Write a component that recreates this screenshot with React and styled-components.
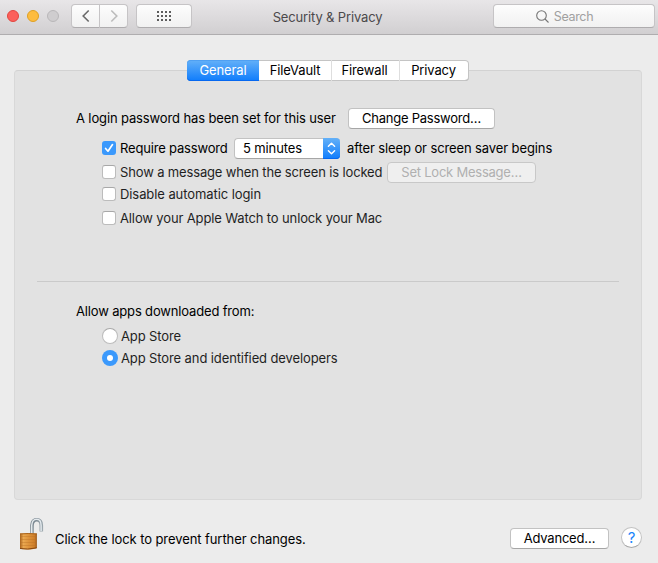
import React, { useState } from 'react';
import styled, { createGlobalStyle, css } from 'styled-components';

const GlobalStyle = createGlobalStyle`
  * {
    box-sizing: border-box;
  }

  body {
    margin: 0;
    background: #ececec;
    font-family: Inter, 'Liberation Sans', sans-serif;
    font-size: 13px;
    letter-spacing: -0.12px;
    color: #000;
  }

  button {
    font: inherit;
    padding: 0;
  }
`;

const Window = styled.div`
  display: flex;
  flex-direction: column;
  width: 658px;
  height: 563px;
  overflow: hidden;
  background: #ececec;
`;

const TitleBar = styled.header`
  display: flex;
  flex: none;
  height: 35px;
  padding: 4px 3px 0 7px;
  background: linear-gradient(#e8e6e8, #d1cfd1);
  border-bottom: 1px solid #afadaf;
`;

const Lights = styled.div`
  display: flex;
  gap: 8px;
  width: 64px;
  padding-top: 6px;
`;

const Light = styled.span`
  width: 12px;
  height: 12px;
  border-radius: 50%;
  background: ${props => props.$fill};
  border: 1px solid ${props => props.$edge};
`;

const barControl = css`
  display: flex;
  align-items: center;
  justify-content: center;
  height: 24px;
  border: 1px solid #c6c4c6;
  border-bottom-color: #aeacae;
  background: linear-gradient(#fdfdfd, #f1f1f1);
`;

const NavButton = styled.button`
  ${barControl}
  width: ${props => (props.$side === 'left' ? 29 : 28)}px;
  border-radius: ${props => (props.$side === 'left' ? '4px 0 0 4px' : '0 4px 4px 0')};
  ${props => props.$side === 'right' && 'border-left: 0;'}
`;

const GridButton = styled.button`
  ${barControl}
  width: 56px;
  margin-left: 8px;
  border-radius: 4px;
`;

const Title = styled.h1`
  flex: 1;
  margin: 0;
  padding: 5px 30px 0 0;
  font-size: 13px;
  line-height: 17px;
  font-weight: 400;
  text-align: center;
  letter-spacing: -0.15px;
  color: #4b494b;
`;

const SearchField = styled.div`
  ${barControl}
  width: 162px;
  gap: 5px;
  padding-right: 19px;
  border-radius: 4px;
  color: #a0a0a0;
  font-size: 12.5px;
  letter-spacing: -0.35px;
`;

const Main = styled.main`
  flex: none;
  padding: 35px 16px 0 14px;
`;

const Panel = styled.section`
  height: 430px;
  border: 1px solid #d8d8d8;
  border-top-color: #d2d2d2;
  border-radius: 4px;
  background: #e2e2e2;
`;

const Tabs = styled.nav`
  display: flex;
  width: 282px;
  height: 21px;
  margin: -11px 0 0 172px;
  border-radius: 4px;
  background: #fff;
  box-shadow: inset 0 0 0 1px #c4c4c4, inset 0 -1px 0 #a5a5a5;
`;

const Tab = styled.button`
  width: ${props => props.$width}px;
  padding-right: ${props => (props.$divided ? 2 : 0)}px;
  border: 0;
  border-left: ${props => (props.$divided ? '1px solid #dedede' : '0')};
  background: none;
  line-height: 21px;
  letter-spacing: -0.12px;

  ${props => props.$active && css`
    color: #fff;
    background: linear-gradient(#64b1f8, #0f7cfc);
    border-radius: 4px 0 0 4px;
    box-shadow: inset 0 1px 0 #4fa0f2, inset 0 -1px 0 #0668f0;
  `}
`;

const Settings = styled.div`
  height: 200px;
  padding: 27px 0 0 61px;
`;

const Row = styled.div`
  display: flex;
  align-items: center;
  height: ${props => props.$height}px;
  padding-left: ${props => (props.$indent ? 26 : 0)}px;
`;

const Label = styled.span`
  flex: none;
  width: ${props => (props.$width ? `${props.$width}px` : 'auto')};
  margin-bottom: 2px;
  white-space: nowrap;
  letter-spacing: ${props => props.$track || -0.13}px;
  color: ${props => (props.$soft ? '#1f1f1f' : '#000')};
`;

const SourceLabel = styled(Label)`
  margin-bottom: 0;
  letter-spacing: -0.11px;
`;

const PushButton = styled.button`
  width: ${props => props.$width}px;
  height: 21px;
  border: 1px solid #c2c2c2;
  border-bottom-color: #a6a6a6;
  border-radius: 4px;
  background: #fff;
  color: #000;
  line-height: 19px;
  letter-spacing: -0.23px;

  &:disabled {
    border-color: #c8c8c8;
    background: #efefef;
    color: #b0b0b0;
  }
`;

const CheckMark = styled.span`
  display: flex;
  flex: none;
  align-items: center;
  justify-content: center;
  width: 14px;
  height: 14px;
  margin: 0 4px 1px 0;
  border: 1px solid #bcbcbc;
  border-top-color: #a8a8a8;
  border-radius: 3px;
  background: #fff;

  ${props => props.$checked && css`
    border: 0;
    background: #3b99fc;
  `}
`;

const Popup = styled.div`
  display: flex;
  justify-content: space-between;
  width: 106px;
  height: 21px;
  margin: 0 7px 0 6px;
  padding-left: 8px;
  border: 1px solid #c2c2c2;
  border-bottom-color: #a6a6a6;
  border-right: 0;
  border-radius: 4px;
  background: #fff;
  line-height: 19px;
`;

const Stepper = styled.span`
  display: flex;
  align-items: center;
  justify-content: center;
  width: 17px;
  height: 21px;
  margin-top: -1px;
  border-radius: 0 4px 4px 0;
  background: linear-gradient(#64b1f8, #0f7cfc);
  box-shadow: inset 0 -1px 0 #0668f0;
`;

const Divider = styled.hr`
  height: 1px;
  margin: 0 22px;
  border: 0;
  background: #cacaca;
`;

const Sources = styled.div`
  padding: 19px 0 0 61px;
`;

const RadioMark = styled.span`
  display: flex;
  flex: none;
  align-items: center;
  justify-content: center;
  width: 16px;
  height: 16px;
  margin-right: 3px;
  border: 1px solid #bcbcbc;
  border-top-color: #a8a8a8;
  border-radius: 50%;
  background: #fff;

  ${props => props.$checked && css`
    border: 0;
    background: #3b99fc;

    &::after {
      content: '';
      width: 6px;
      height: 6px;
      border-radius: 50%;
      background: #fff;
    }
  `}
`;

const Footer = styled.footer`
  display: flex;
  align-items: center;
  height: 63px;
  padding: 14px 16px 0 18px;
`;

const FooterText = styled.span`
  flex: 1;
  padding-left: 11px;
  letter-spacing: -0.08px;
`;

const HelpButton = styled.button`
  width: 21px;
  height: 21px;
  margin: 0 0 2px 12px;
  border: 1px solid #c2c2c2;
  border-bottom-color: #a6a6a6;
  border-radius: 50%;
  background: #fff;
  color: #1a85fb;
  font-size: 15px;
  line-height: 19px;
`;

const Chevron = ({ flip, color }) => (
  <svg width="8" height="14" viewBox="0 0 8 14" fill="none">
    <path d={flip ? 'M1.3 1.5 L6.8 7 L1.3 12.5' : 'M6.7 1.5 L1.2 7 L6.7 12.5'} stroke={color} strokeWidth="1.6" />
  </svg>
);

const DotGrid = () => (
  <svg width="14" height="10" viewBox="0 0 14 10" fill="#5c5c5c">
    {[0, 4, 8].map(y => [0, 4, 8, 12].map(x => (
      <rect key={`${x}-${y}`} x={x} y={y} width="2" height="2" />
    )))}
  </svg>
);

const SearchIcon = () => (
  <svg width="13" height="13" viewBox="0 0 13 13" fill="none" stroke="#757575" strokeWidth="1.1">
    <circle cx="5.5" cy="5.5" r="4.8" />
    <path d="M9 9 L12.5 12.5" />
  </svg>
);

const Tick = () => (
  <svg width="14" height="14" viewBox="0 0 14 14" fill="none">
    <path d="M3.6 7.5 L6 10.2 L10.5 3.6" stroke="#fff" strokeWidth="1.7" strokeLinecap="round" strokeLinejoin="round" />
  </svg>
);

const StepArrows = () => (
  <svg width="9" height="13" viewBox="0 0 9 13" fill="none" stroke="#fff" strokeWidth="1.4" strokeLinecap="round" strokeLinejoin="round">
    <path d="M1.4 4.3 L4.5 1.3 L7.6 4.3" />
    <path d="M1.4 8.7 L4.5 11.7 L7.6 8.7" />
  </svg>
);

const Lock = styled.svg`
  flex: none;
  margin-bottom: 9px;
`;

const LockIcon = () => (
  <Lock width="26" height="34" viewBox="0 0 26 34">
    <defs>
      <linearGradient id="brass" x1="0" x2="1" y1="0" y2="0">
        <stop offset="0" stopColor="#a8621c" />
        <stop offset="0.2" stopColor="#eaa850" />
        <stop offset="0.5" stopColor="#de943c" />
        <stop offset="0.85" stopColor="#cf7f2a" />
        <stop offset="1" stopColor="#9b5a1c" />
      </linearGradient>
      <linearGradient id="steel" x1="0" x2="1" y1="0" y2="1">
        <stop offset="0" stopColor="#6c7a84" />
        <stop offset="0.5" stopColor="#8d9aa2" />
        <stop offset="1" stopColor="#a0abb1" />
      </linearGradient>
    </defs>
    <path d="M14 17 V8.5 C14 4.8 16 2.8 18.7 2.8 C21.6 2.8 23.3 5 23.3 8.5 V14.5" fill="none" stroke="url(#steel)" strokeWidth="3.6" />
    <path d="M13.7 17 V8.5 C13.9 4.6 16 2.3 18.7 2.3 C21.8 2.3 23.1 5 23.1 8.5 V14" fill="none" stroke="#e3e9ed" strokeWidth="1.5" />
    <path d="M2 16.6 Q10 15.6 18.9 16.6 V30.8 Q17 32.6 9 32.6 Q3.6 32.4 2 31.6 Z" fill="url(#brass)" />
    <path d="M2 17 Q10 16 18.9 17" fill="none" stroke="#a9641d" strokeWidth="1" />
    {[19.5, 22.5, 25.5, 28.5].map(y => (
      <path key={y} d={`M2.5 ${y} H18.5`} stroke="#b86f24" strokeWidth="0.8" opacity="0.45" />
    ))}
    <path d="M2 31.5 Q9 33 18.9 30.8" fill="none" stroke="#84450f" strokeWidth="1" />
  </Lock>
);

const tabs = [
  { name: 'General', width: 72 },
  { name: 'FileVault', width: 72 },
  { name: 'Firewall', width: 68 },
  { name: 'Privacy', width: 70 },
];

const sources = ['App Store', 'App Store and identified developers'];

const App = () => {
  const [activeTab, setActiveTab] = useState('General');
  const [source, setSource] = useState(sources[1]);

  return (
    <>
      <GlobalStyle />
      <Window>
        <TitleBar>
          <Lights>
            <Light $fill="#fc605b" $edge="#e2463f" />
            <Light $fill="#fdbc40" $edge="#dfa023" />
            <Light $fill="#cfcdcf" $edge="#b9b7b9" />
          </Lights>
          <NavButton $side="left"><Chevron color="#6a6a6a" /></NavButton>
          <NavButton $side="right"><Chevron flip color="#bcbcbc" /></NavButton>
          <GridButton><DotGrid /></GridButton>
          <Title>Security &amp; Privacy</Title>
          <SearchField>
            <SearchIcon />
            Search
          </SearchField>
        </TitleBar>
        <Main>
          <Panel>
            <Tabs>
              {tabs.map((tab, i) => (
                <Tab
                  key={tab.name}
                  $width={tab.width}
                  $divided={i > 1}
                  $active={tab.name === activeTab}
                  onClick={() => setActiveTab(tab.name)}
                >
                  {tab.name}
                </Tab>
              ))}
            </Tabs>
            <Settings>
              <Row $height={21}>
                <Label $width={272}>A login password has been set for this user</Label>
                <PushButton $width={147}>Change Password…</PushButton>
              </Row>
              <Row $height={39} $indent>
                <CheckMark $checked><Tick /></CheckMark>
                <Label $width={108} $track={-0.18}>Require password</Label>
                <Popup>
                  5 minutes
                  <Stepper><StepArrows /></Stepper>
                </Popup>
                <Label $track={-0.11}>after sleep or screen saver begins</Label>
              </Row>
              <Row $height={9} $indent>
                <CheckMark />
                <Label $width={267} $track={-0.15} $soft>Show a message when the screen is locked</Label>
                <PushButton $width={149} disabled>Set Lock Message…</PushButton>
              </Row>
              <Row $height={35} $indent>
                <CheckMark />
                <Label $track={-0.08} $soft>Disable automatic login</Label>
              </Row>
              <Row $height={13} $indent>
                <CheckMark />
                <Label $soft>Allow your Apple Watch to unlock your Mac</Label>
              </Row>
            </Settings>
            <Divider />
            <Sources>
              <Row $height={22}>
                <Label $track={-0.16}>Allow apps downloaded from:</Label>
              </Row>
              <Row $height={2} />
              {sources.map(name => (
                <Row key={name} $height={22} $indent onClick={() => setSource(name)}>
                  <RadioMark $checked={name === source} />
                  <SourceLabel $soft>{name}</SourceLabel>
                </Row>
              ))}
            </Sources>
          </Panel>
        </Main>
        <Footer>
          <LockIcon />
          <FooterText>Click the lock to prevent further changes.</FooterText>
          <PushButton $width={99}>Advanced…</PushButton>
          <HelpButton>?</HelpButton>
        </Footer>
      </Window>
    </>
  );
};

export default App;
